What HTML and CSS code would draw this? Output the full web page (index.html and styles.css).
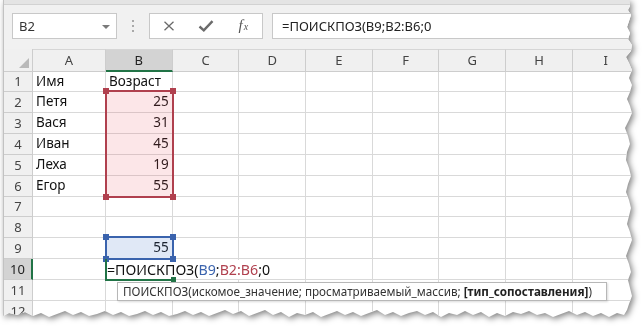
FILE: index.html
```html
<!DOCTYPE html>
<html lang="ru">
<head>
    <meta charset="UTF-8">
    <title>ПОИСКПОЗ</title>
    <link rel="stylesheet" href="styles.css">
</head>
<body>
    <div class="shot">
        <div class="sheet">
            <div class="ribbon-edge"></div>

            <div class="formula-bar">
                <div class="name-box">
                    <span>B2</span>
                    <i class="caret"></i>
                </div>
                <div class="grip"><i></i><i></i><i></i></div>
                <div class="fx-buttons">
                    <span class="fx-btn">
                        <svg width="12" height="10" viewBox="0 0 12 10"><path d="M1.5 0.8 L10.5 9.2 M10.5 0.8 L1.5 9.2" stroke="#6b6b6b" stroke-width="1.3" fill="none"/></svg>
                    </span>
                    <span class="fx-btn">
                        <svg width="16" height="12" viewBox="0 0 16 12"><path d="M1.5 6.5 L5.8 10.3 L14.5 1.2" stroke="#6b6b6b" stroke-width="2.4" fill="none"/></svg>
                    </span>
                    <span class="fx-btn fx">f<small>x</small></span>
                </div>
                <div class="formula-input">=ПОИСКПОЗ(B9;B2:B6;0</div>
            </div>

            <div class="grid-wrap">
                <div class="cells">
                    <div class="corner"><i></i></div>
                    <div class="ch">A</div><div class="ch on">B</div><div class="ch">C</div><div class="ch">D</div><div class="ch">E</div><div class="ch">F</div><div class="ch">G</div><div class="ch">H</div><div class="ch">I</div>

                    <div class="rh">1</div><div class="c">Имя</div><div class="c">Возраст</div><div class="c"></div><div class="c"></div><div class="c"></div><div class="c"></div><div class="c"></div><div class="c"></div><div class="c"></div>
                    <div class="rh">2</div><div class="c">Петя</div><div class="c num">25</div><div class="c"></div><div class="c"></div><div class="c"></div><div class="c"></div><div class="c"></div><div class="c"></div><div class="c"></div>
                    <div class="rh">3</div><div class="c">Вася</div><div class="c num">31</div><div class="c"></div><div class="c"></div><div class="c"></div><div class="c"></div><div class="c"></div><div class="c"></div><div class="c"></div>
                    <div class="rh">4</div><div class="c">Иван</div><div class="c num">45</div><div class="c"></div><div class="c"></div><div class="c"></div><div class="c"></div><div class="c"></div><div class="c"></div><div class="c"></div>
                    <div class="rh">5</div><div class="c">Леха</div><div class="c num">19</div><div class="c"></div><div class="c"></div><div class="c"></div><div class="c"></div><div class="c"></div><div class="c"></div><div class="c"></div>
                    <div class="rh">6</div><div class="c">Егор</div><div class="c num">55</div><div class="c"></div><div class="c"></div><div class="c"></div><div class="c"></div><div class="c"></div><div class="c"></div><div class="c"></div>
                    <div class="rh">7</div><div class="c"></div><div class="c"></div><div class="c"></div><div class="c"></div><div class="c"></div><div class="c"></div><div class="c"></div><div class="c"></div><div class="c"></div>
                    <div class="rh">8</div><div class="c"></div><div class="c"></div><div class="c"></div><div class="c"></div><div class="c"></div><div class="c"></div><div class="c"></div><div class="c"></div><div class="c"></div>
                    <div class="rh">9</div><div class="c"></div><div class="c num">55</div><div class="c"></div><div class="c"></div><div class="c"></div><div class="c"></div><div class="c"></div><div class="c"></div><div class="c"></div>
                    <div class="rh on">10</div><div class="c"></div><div class="c"></div><div class="c"></div><div class="c"></div><div class="c"></div><div class="c"></div><div class="c"></div><div class="c"></div><div class="c"></div>
                    <div class="rh">11</div><div class="c"></div><div class="c"></div><div class="c"></div><div class="c"></div><div class="c"></div><div class="c"></div><div class="c"></div><div class="c"></div><div class="c"></div>
                    <div class="rh">12</div><div class="c"></div><div class="c"></div><div class="c"></div><div class="c"></div><div class="c"></div><div class="c"></div><div class="c"></div><div class="c"></div><div class="c"></div>
                </div>

                <!-- выделения поверх ячеек -->
                <div class="marks">
                    <div class="range range-red">
                        <i class="h tl"></i><i class="h tr"></i><i class="h bl"></i><i class="h br"></i>
                    </div>
                    <div class="range range-blue">
                        <i class="h tl"></i><i class="h tr"></i><i class="h bl"></i><i class="h br"></i>
                    </div>
                    <div class="active-cell"><i class="fill-handle"></i></div>
                    <div class="edit-line">
                        <span class="edit">=ПОИСКПОЗ(<b class="ref-blue">B9</b>;<b class="ref-red">B2:B6</b>;0</span>
                    </div>
                    <div class="tooltip">ПОИСКПОЗ(искомое_значение; просматриваемый_массив; <strong>[тип_сопоставления]</strong>)</div>
                </div>
            </div>
        </div>
    </div>
</body>
</html>
```

FILE: styles.css
```css
* {
    margin: 0;
    padding: 0;
    box-sizing: border-box;
}

body {
    width: 643px;
    height: 330px;
    overflow: hidden;
    background: #fff;
    font-family: 'Noto Sans', 'Open Sans', sans-serif;
    color: #222;
}

.shot {
    padding-left: 3px;
    filter: drop-shadow(2px 2px 3px rgba(0, 0, 0, 0.5));
}

.sheet {
    width: 631px;
    height: 320px;
    background: #fff;
    border-left: 1px solid #c2c2c2;
    overflow: hidden;
    clip-path: polygon(
        0 0, 626px 0, 627px 6px, 625px 10px, 628px 15px, 626px 21px, 624px 27px, 627px 33px,
        625px 39px, 629px 45px, 628px 51px, 623px 57px, 626px 63px, 629px 70px, 626px 78px,
        629px 85px, 627px 92px, 624px 99px, 627px 106px, 629px 113px, 626px 120px, 622px 128px,
        625px 136px, 627px 144px, 624px 152px, 623px 160px, 626px 168px, 628px 176px, 625px 184px,
        623px 192px, 626px 200px, 628px 208px, 626px 216px, 624px 224px, 627px 232px, 629px 240px,
        626px 248px, 623px 256px, 626px 264px, 628px 272px, 625px 280px, 627px 288px, 629px 296px,
        626px 304px, 624px 310px, 621px 315px,
        614px 313px, 606px 317px, 598px 313px, 590px 316px, 582px 312px, 574px 315px, 566px 311px,
        558px 314px, 550px 317px, 542px 313px, 534px 315px, 526px 311px, 518px 314px, 510px 312px,
        502px 316px, 494px 313px, 486px 317px, 478px 312px, 470px 315px, 462px 311px, 454px 315px,
        446px 313px, 438px 317px, 430px 312px, 422px 315px, 414px 311px, 406px 313px, 398px 316px,
        390px 312px, 382px 315px, 374px 310px, 366px 313px, 358px 316px, 350px 312px, 342px 315px,
        334px 311px, 326px 314px, 318px 317px, 310px 312px, 302px 315px, 294px 313px, 286px 317px,
        278px 312px, 270px 315px, 262px 310px, 254px 313px, 246px 316px, 238px 311px, 230px 314px,
        222px 310px, 214px 313px, 206px 316px, 198px 312px, 190px 315px, 182px 311px, 174px 314px,
        166px 316px, 158px 312px, 150px 315px, 142px 311px, 134px 314px, 126px 316px, 118px 312px,
        110px 315px, 102px 311px, 94px 314px, 86px 316px, 78px 312px, 70px 315px, 62px 311px,
        54px 314px, 46px 317px, 38px 313px, 30px 316px, 22px 312px, 14px 315px, 6px 313px, 0 316px
    );
}

/* нижний край ленты */
.ribbon-edge {
    height: 5px;
    background: #e4e4e4;
    border-bottom: 1px solid #d2d2d2;
}

/* строка формул */
.formula-bar {
    display: flex;
    align-items: stretch;
    height: 44px;
    padding: 8px 0 10px 8px;
    background: #f1f1f1;
}

.name-box {
    position: relative;
    width: 105px;
    background: #fff;
    border: 1px solid #c8c8c8;
    display: flex;
    align-items: center;
    padding-left: 6px;
    font-size: 13px;
    color: #333;
}

.caret {
    position: absolute;
    right: 6px;
    top: 11px;
    border-left: 4px solid transparent;
    border-right: 4px solid transparent;
    border-top: 4px solid #7a7a7a;
}

.grip {
    width: 32px;
    display: flex;
    flex-direction: column;
    align-items: center;
    justify-content: center;
    gap: 3px;
}

.grip i {
    width: 2px;
    height: 2px;
    background: #a9a9a9;
}

.fx-buttons {
    width: 114px;
    display: flex;
    background: #fff;
    border: 1px solid #c8c8c8;
    margin-right: 9px;
}

.fx-btn {
    width: 38px;
    display: flex;
    align-items: center;
    justify-content: center;
}

.fx {
    font-family: 'Liberation Serif', serif;
    font-style: italic;
    font-size: 15px;
    color: #555;
    padding-bottom: 2px;
}

.fx small {
    font-size: 10px;
    margin-left: 1px;
    position: relative;
    top: 1px;
}

.formula-input {
    flex: 1;
    background: #fff;
    border: 1px solid #c8c8c8;
    border-right: none;
    padding-left: 9px;
    font-size: 13px;
    line-height: 24px;
    color: #222;
}

/* сетка листа */
.grid-wrap {
    position: relative;
}

.cells,
.marks {
    display: grid;
    grid-template-columns: 29px 73px repeat(8, 66.7px);
    grid-template-rows: 22.5px repeat(12, 20.85px);
}

.marks {
    position: absolute;
    inset: 0;
}

.corner,
.ch,
.rh {
    background: #f0f0f0;
    border-right: 1px solid #cdcdcd;
    border-bottom: 1px solid #cdcdcd;
    color: #444;
    font-size: 13px;
}

.corner {
    position: relative;
}

.corner i {
    position: absolute;
    right: 3px;
    bottom: 3px;
    border-left: 10px solid transparent;
    border-bottom: 10px solid #b9b9b9;
}

.ch {
    display: flex;
    align-items: center;
    justify-content: center;
    border-top: 1px solid #d6d6d6;
}

.ch.on {
    background: #d3d3d3;
    border-bottom: 2px solid #217346;
    color: #222;
}

.rh {
    display: flex;
    align-items: center;
    justify-content: center;
}

.rh.on {
    background: #d3d3d3;
    border-right: 2px solid #217346;
    color: #222;
}

.c {
    border-right: 1px solid #d9d9d9;
    border-bottom: 1px solid #d9d9d9;
    font-size: 13.5px;
    line-height: 19px;
    padding: 0 3px;
    white-space: nowrap;
    color: #111;
}

.c.num {
    text-align: right;
}

/* выделенные диапазоны */
.range {
    position: relative;
    border: 2px solid;
    margin: -2px -1px -1px -1px;
}

.range-red {
    grid-column: 3;
    grid-row: 3 / 8;
    border-color: #b0404e;
    background: rgba(232, 90, 100, 0.15);
}

.range-blue {
    grid-column: 3;
    grid-row: 10;
    border-color: #3a63ad;
    background: rgba(70, 120, 200, 0.17);
}

.h {
    position: absolute;
    width: 6px;
    height: 6px;
}

.range-red .h { background: #b0404e; }
.range-blue .h { background: #3a63ad; }

.h.tl { left: -4px; top: -4px; }
.h.tr { right: -4px; top: -4px; }
.h.bl { left: -4px; bottom: -4px; }
.h.br { right: -4px; bottom: -4px; }

.active-cell {
    grid-column: 3;
    grid-row: 11;
    position: relative;
    border-left: 2px solid #217346;
    border-bottom: 2px solid #217346;
    margin: 0 0 -1px -1px;
}

.fill-handle {
    position: absolute;
    right: -3px;
    bottom: -3px;
    width: 5px;
    height: 5px;
    background: #217346;
}

.edit-line {
    grid-column: 3 / 7;
    grid-row: 11;
    display: flex;
    align-items: center;
    padding-left: 1px;
}

.edit {
    background: #fff;
    font-size: 14.2px;
    line-height: 19px;
    padding-right: 3px;
    color: #111;
}

.edit b {
    font-weight: normal;
}

.ref-blue { color: #3a63ad; }
.ref-red { color: #b0404e; }

.tooltip {
    grid-column: 3 / -1;
    grid-row: 12;
    justify-self: start;
    align-self: start;
    margin: 2px 0 0 11px;
    width: 490px;
    height: 19px;
    background: #fff;
    border: 1px solid #b7b7b7;
    box-shadow: 1px 1px 2px rgba(0, 0, 0, 0.15);
    font-size: 11.7px;
    line-height: 17px;
    padding-left: 5px;
    color: #333;
    white-space: nowrap;
}

.tooltip strong {
    color: #222;
}
```
